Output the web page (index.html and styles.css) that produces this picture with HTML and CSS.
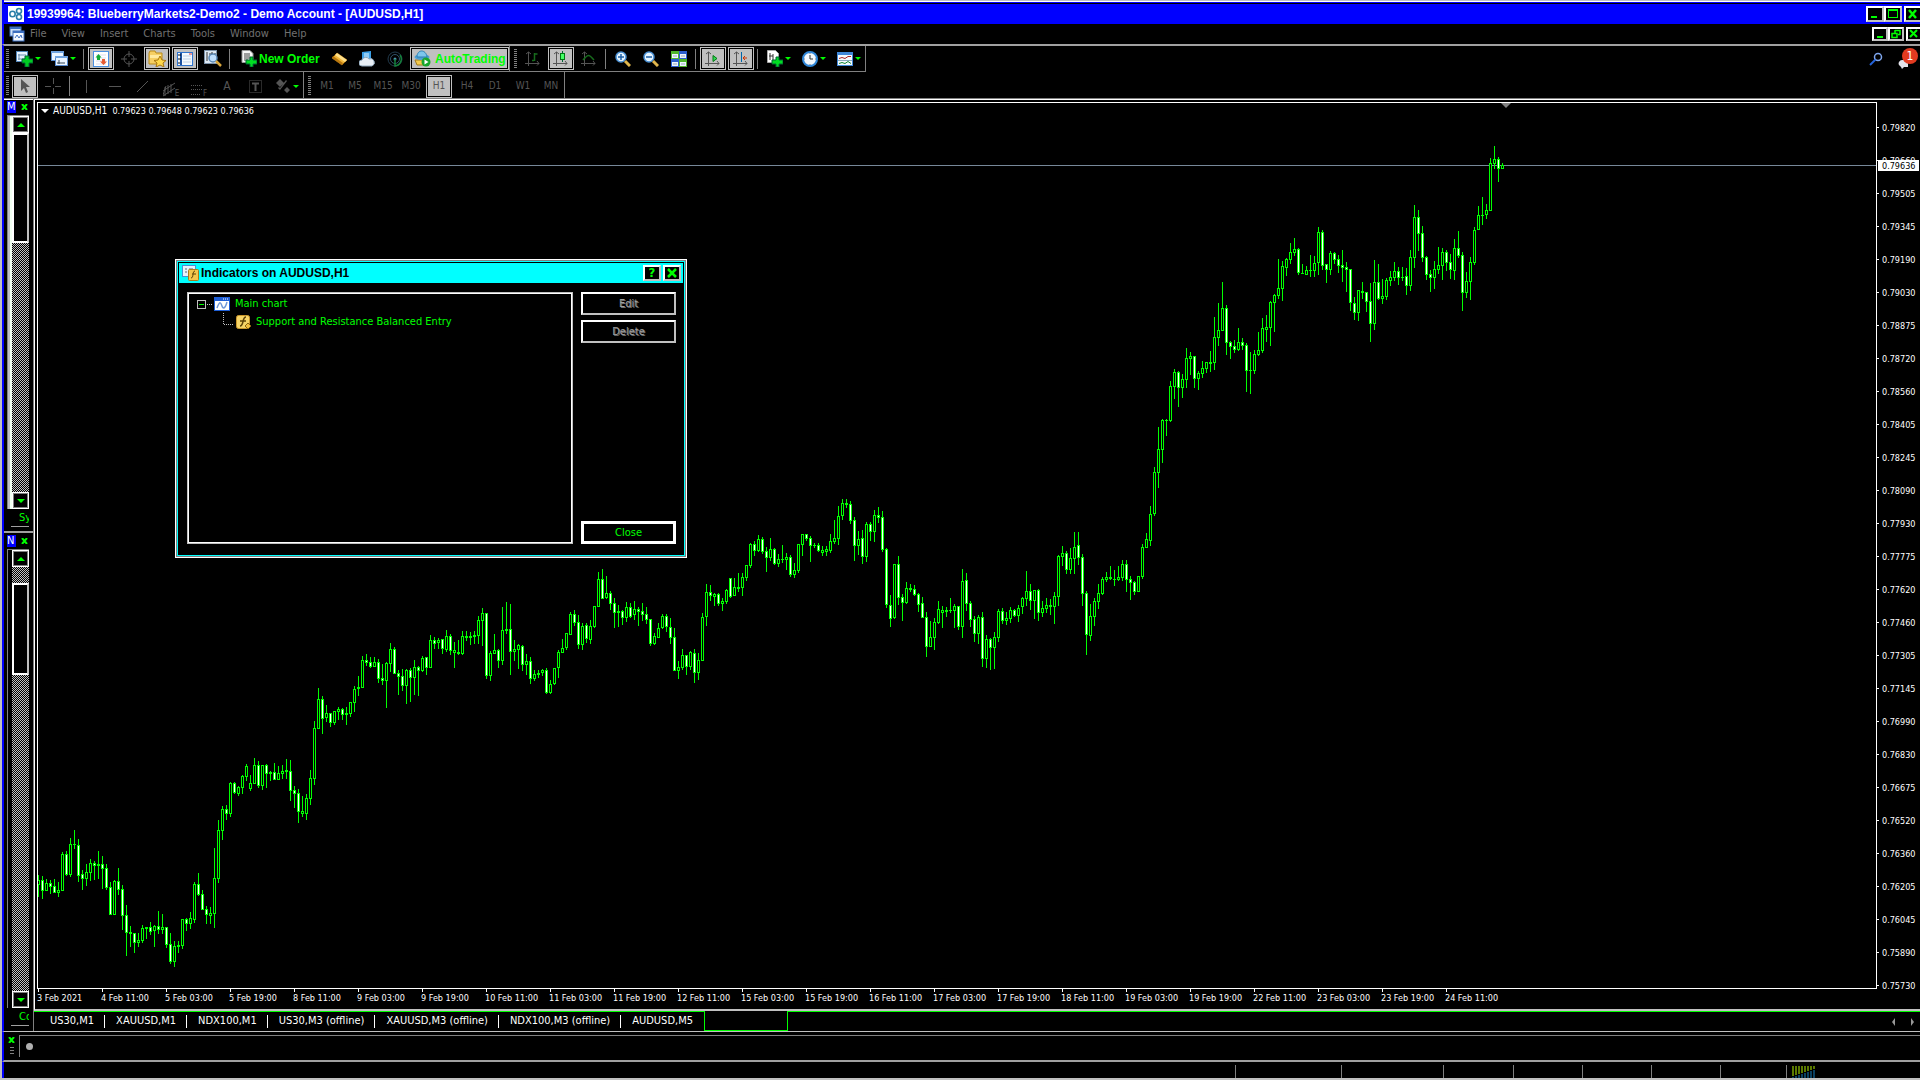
FILE: index.html
```html
<!DOCTYPE html>
<html lang="en">
<head>
<meta charset="utf-8">
<title>19939964: BlueberryMarkets2-Demo2 - Demo Account - [AUDUSD,H1]</title>
<link rel="stylesheet" href="styles.css">
</head>
<body>
<div class="app">
  <header class="titlebar">
    <svg class="app-logo" width="16" height="16" viewBox="0 0 16 16"><rect width="16" height="16" fill="#fff"/><g fill="none" stroke="#2a7fa8" stroke-width="1.6"><circle cx="4.500" cy="8" r="2.700"/><circle cx="11" cy="5" r="2.500"/><circle cx="11" cy="11" r="2.500"/></g></svg>
    <h1>19939964: BlueberryMarkets2-Demo2 - Demo Account - [AUDUSD,H1]</h1>
    <div class="window-buttons">
      <button class="wbtn" aria-label="Minimize"><svg width="14" height="12"><path d="M3 8h6v2H3z" fill="#0f0"/></svg></button>
      <button class="wbtn" aria-label="Maximize"><svg width="14" height="12"><path d="M2 1h10v9H2zM3 3v6h8V3z" fill="#0f0" fill-rule="evenodd"/></svg></button>
      <button class="wbtn wbtn-close" aria-label="Close"><svg width="14" height="12"><path d="M3 2l7 8M10 2l-7 8" stroke="#0f0" stroke-width="2.500"/></svg></button>
    </div>
  </header>

  <nav class="menubar">
    <svg class="menu-icon" width="16" height="16" viewBox="0 0 16 16"><rect x="1" y="1" width="11" height="9" fill="#cfe2f8" stroke="#3c6fc0"/><path d="M1 1h11v2H1z" fill="#3c6fc0"/><rect x="4" y="5" width="11" height="10" fill="#f4f9ff" stroke="#3c6fc0"/><path d="M4 5h11v2H4z" fill="#3c6fc0"/><path d="M6 12l2-3 2 3 2-3 1 3" fill="none" stroke="#3c6fc0"/></svg>
    <a href="#file">File</a><a href="#view">View</a><a href="#insert">Insert</a><a href="#charts">Charts</a><a href="#tools">Tools</a><a href="#window">Window</a><a href="#help">Help</a>
    <div class="window-buttons small">
      <button class="wbtn" aria-label="Minimize chart"><svg width="12" height="10"><path d="M3 7h6v2H3z" fill="#0f0"/></svg></button>
      <button class="wbtn" aria-label="Restore chart"><svg width="12" height="10"><path d="M5 1.500h5v4H8M5 1v3" fill="none" stroke="#0f0" stroke-width="1.500"/><rect x="2" y="4.500" width="5" height="4" fill="#000" stroke="#0f0" stroke-width="1.500"/></svg></button>
      <button class="wbtn wbtn-close" aria-label="Close chart"><svg width="12" height="10"><path d="M2 1l7 7M9 1l-7 7" stroke="#0f0" stroke-width="2"/></svg></button>
    </div>
  </nav>

  <div class="toolbar-row">
    <div class="toolbar">
      <span class="grip"></span>
      <button class="tool drop" aria-label="New chart"><svg width="17" height="16"><rect x=".5" y=".5" width="11" height="10" fill="#eaf4ff" stroke="#5588bb"/><path d="M2 8h8M3 3v6M2 4h8" stroke="#6b8fae"/><path d="M9 5h4v3h4v4h-4v4H9v-4H6V8h3z" fill="#0c2" stroke="#063"/></svg></button>
      <button class="tool drop" aria-label="Profiles"><svg width="17" height="16"><rect x=".5" y=".5" width="12" height="9" fill="#eaf4ff" stroke="#5588cc"/><path d="M0 0h13v2H0z" fill="#6fa3e0"/><rect x="4.500" y="5.500" width="12" height="9" fill="#eaf4ff" stroke="#5588cc"/><path d="M4 5h13v2H4z" fill="#6fa3e0"/><path d="M6 12h8M8 9v4" stroke="#345"/></svg></button>
      <span class="sep"></span>
      <button class="tool on" aria-label="Market watch"><svg width="16" height="16"><rect x=".5" y=".5" width="15" height="15" fill="#fff" stroke="#4b8fe0"/><path d="M3 4h10M3 7h10M3 10h10M3 13h10" stroke="#dde"/><path d="M5.500 3l3 3.500H7V9H4V6.500H2.500z" fill="#1a3"/><path d="M10.500 14l-3.500-3.500h2V8h3v2.500h2z" fill="#e65a30"/></svg></button>
      <button class="tool" aria-label="Data window"><svg width="16" height="16" fill="none" stroke="#555"><circle cx="8" cy="8" r="5"/><path d="M8 0v6M8 10v6M0 8h6M10 8h6"/></svg></button>
      <button class="tool on" aria-label="Navigator"><svg width="18" height="17"><path d="M1 3l1-2h5l1 2h6v11H1z" fill="#f6cf63" stroke="#b98a18"/><path d="M2 5h11v3H2z" fill="#ffeaa0"/><path d="M12 6l2 4 4 .5-3 2.500 1 4-4-2-4 2 1-4-3-2.500 4-.5z" fill="#ffd94a" stroke="#a87510"/></svg></button>
      <button class="tool on" aria-label="Terminal"><svg width="16" height="16"><rect x=".5" y="1.500" width="15" height="13" fill="#f4faff" stroke="#2f74cf"/><path d="M4 2v12" stroke="#1b4f9d" stroke-width="2"/><path d="M1 4h3M1 8h3M1 12h2" stroke="#111"/><path d="M6 5h8M6 8h8M6 11h8" stroke="#c0d0e4"/><path d="M12 3h3" stroke="#d33"/></svg></button>
      <button class="tool" aria-label="Strategy tester"><svg width="18" height="17"><rect x=".5" y=".5" width="12" height="13" fill="#dfeaf4" stroke="#7d93aa"/><path d="M3 2v9M5 4h4M8 2v8M11 3v4" stroke="#333"/><circle cx="9" cy="8" r="4" fill="#bfe0ff" stroke="#5b87b4" stroke-width="1.500"/><path d="M12 11l5 5" stroke="#d9a63b" stroke-width="2.500"/></svg></button>
      <span class="sep"></span>
      <button class="tool-text order"><svg width="16" height="17"><path d="M1 .5h8l3 3v9H1z" fill="#f6f6f6" stroke="#999"/><path d="M3 4h6M3 6h6M3 8h6M3 10h4" stroke="#444"/><path d="M9 7h3v3h4v4h-4v3H9v-3H5v-4h4z" fill="#0d2" stroke="#063"/></svg>New Order</button>
      <button class="tool" aria-label="MetaEditor"><svg width="17" height="14"><path d="M6 1l10 7-5 5L1 6z" fill="#f1b636" stroke="#8d5a06"/><path d="M6 1l10 7-2 2L4 3z" fill="#ffe08a"/><path d="M1 6l10 7 1-2L2 4z" fill="#b87710"/></svg></button>
      <button class="tool" aria-label="Virtual hosting"><svg width="16" height="16"><path d="M3 1l9-1v10l-9 1z" fill="#3ba0e8"/><path d="M5 3h5M5 5h5M5 7h5" stroke="#e4f5ff"/><path d="M3 15a3 3 0 010-6 4 4 0 017-1 3.500 3.500 0 013 7z" fill="#e8eef4" stroke="#8ea6ba"/></svg></button>
      <button class="tool" aria-label="Signals"><svg width="16" height="16" fill="none"><circle cx="8" cy="8" r="7" stroke="#223b4d"/><circle cx="8" cy="8" r="4.500" stroke="#31536a"/><circle cx="8" cy="8" r="1.500" fill="#4a90b0"/><path d="M8 8v7A7 7 0 0013 4" stroke="#15803a" stroke-width="1.500"/></svg></button>
      <button class="tool-text auto"><svg width="17" height="17"><path d="M1 10h13l-2 5H3z" fill="#f5cc4f" stroke="#a07a1d"/><ellipse cx="8" cy="7" rx="7.500" ry="3" fill="#4d9fd2"/><path d="M3 7c0-8 9-8 10 0z" fill="#7cc6ec" stroke="#2a7fb3"/><circle cx="12" cy="12" r="4.500" fill="#18a62b"/><path d="M10.500 9.500v5l4-2.500z" fill="#fff"/></svg>AutoTrading</button>
    </div>
    <div class="toolbar">
      <span class="grip"></span>
      <button class="tool" aria-label="Bar chart"><svg width="16" height="16" fill="none" stroke="#555"><path d="M3.500 1v14M0 12.500h14M1 3l2.500-2L6 3M12 10l2 2.500-2 2"/><path d="M9.500 2v8M9.500 3h3M7 9.500h2" stroke="#176b1c" stroke-width="1.500"/></svg></button>
      <button class="tool on" aria-label="Candlesticks"><svg width="16" height="16" fill="none" stroke="#555"><path d="M3.500 1v14M0 12.500h14M1 3l2.500-2L6 3M12 10l2 2.500-2 2"/><path d="M9.500 0v11" stroke="#063"/><rect x="7.500" y="2.500" width="4" height="6" fill="#4f6" stroke="#071"/></svg></button>
      <button class="tool" aria-label="Line chart"><svg width="16" height="16" fill="none" stroke="#555"><path d="M3.500 1v14M0 12.500h14M1 3l2.500-2L6 3M12 10l2 2.500-2 2"/><path d="M2 9c5-6 6-6 11 0" stroke="#176b1c" stroke-width="1.500"/></svg></button>
      <span class="sep"></span>
      <button class="tool" aria-label="Zoom in"><svg width="16" height="16"><circle cx="6" cy="6" r="5" fill="#e4f4ff" stroke="#4a90d4" stroke-width="1.500"/><path d="M3 6h6M6 3v6" stroke="#1d5fa6" stroke-width="1.500"/><path d="M10 10l5 5" stroke="#e0b64d" stroke-width="3"/></svg></button>
      <button class="tool" aria-label="Zoom out"><svg width="16" height="16"><circle cx="6" cy="6" r="5" fill="#e4f4ff" stroke="#4a90d4" stroke-width="1.500"/><path d="M3 6h6" stroke="#1d5fa6" stroke-width="1.500"/><path d="M10 10l5 5" stroke="#e0b64d" stroke-width="3"/></svg></button>
      <button class="tool" aria-label="Tile windows"><svg width="16" height="16"><path d="M0 0h8v8H0zM8 8h8v8H8z" fill="#4fb52c"/><path d="M8 0h8v8H8zM0 8h8v8H0z" fill="#2c5fd0"/><path d="M1 3h6v4H1zM9 3h6v4H9zM1 11h6v4H1zM9 11h6v4H9z" fill="#eef6ff"/><path d="M2 5h4M10 5h4M2 13h4M10 13h4" stroke="#9ab"/></svg></button>
      <span class="sep"></span>
      <button class="tool on" aria-label="Auto scroll"><svg width="16" height="16" fill="none" stroke="#555"><path d="M3.500 1v14M0 12.500h14M1 3l2.500-2L6 3M12 10l2 2.500-2 2"/><path d="M8 4.500v6L12 7.500z" fill="#3d5" stroke="#071"/></svg></button>
      <button class="tool on" aria-label="Chart shift"><svg width="16" height="16" fill="none" stroke="#555"><path d="M3.500 1v14M0 12.500h14M1 3l2.500-2L6 3M12 10l2 2.500-2 2"/><path d="M8.500 1v10" stroke="#06a"/><path d="M14 7h-4l2-2M10 7l2 2" stroke="#c30"/></svg></button>
      <span class="sep"></span>
      <button class="tool drop" aria-label="Indicators"><svg width="16" height="17"><path d="M.5 .5h8l3 3v9H.5z" fill="#fff" stroke="#aaa"/><path d="M3 3v7M2 6h4M6 4v6" stroke="#333"/><path d="M9 7h3v3h4v4h-4v3H9v-3H5v-4h4z" fill="#0d2" stroke="#063"/></svg></button>
      <button class="tool drop" aria-label="Periods"><svg width="16" height="16"><circle cx="8" cy="8" r="7" fill="#f2f8fd" stroke="#2f86d8" stroke-width="2"/><path d="M8 4v4h3" fill="none" stroke="#333"/><path d="M8 2v1M8 13v1M2 8h1M13 8h1" stroke="#777"/></svg></button>
      <button class="tool drop" aria-label="Templates"><svg width="16" height="14"><rect x=".5" y=".5" width="15" height="13" fill="#f5faff" stroke="#3f87d8"/><path d="M0 0h16v3H0z" fill="#3f87d8"/><path d="M2 6.500l3-1 3 1 3-2h3" fill="none" stroke="#a22"/><path d="M1 8.500h14" stroke="#8ab"/><path d="M2 11.500l3-1 3 1 3-2 3 2" fill="none" stroke="#183"/></svg></button>
    </div>
    <div class="toolbar-right">
      <button class="tool" aria-label="Search"><svg width="14" height="14"><circle cx="9" cy="5" r="3.500" fill="none" stroke="#7fa6ee" stroke-width="1.500"/><path d="M6.500 7.500L1 13" stroke="#2563d8" stroke-width="2"/></svg></button>
      <button class="tool alerts" aria-label="Notifications"><svg width="12" height="12"><path d="M1 8a4 3.500 0 014-5h5v7H6l-2 2-1-2z" fill="#e2e2ea"/></svg><span class="badge">1</span></button>
    </div>
  </div>

  <div class="toolbar-row second">
    <div class="toolbar">
      <span class="grip"></span>
      <button class="tool on" aria-label="Cursor"><svg width="16" height="16"><path d="M4 1v12l3-3 2 5 2-1-2-5h4z" fill="#555"/></svg></button>
      <button class="tool" aria-label="Crosshair"><svg width="16" height="16"><path d="M8.500 0v6M8.500 10v6M0 8.500h6M10 8.500h6" stroke="#555"/></svg></button>
      <span class="sep"></span>
      <button class="tool" aria-label="Vertical line"><svg width="16" height="16"><path d="M7.500 2v13" stroke="#555"/></svg></button>
      <button class="tool" aria-label="Horizontal line"><svg width="16" height="16"><path d="M2 8.500h12" stroke="#555"/></svg></button>
      <button class="tool" aria-label="Trendline"><svg width="16" height="16"><path d="M2 14L13 3" stroke="#555"/></svg></button>
      <button class="tool lettered" aria-label="Equidistant channel"><svg width="12" height="16"><path d="M0 9l12-8M0 14l12-8M2 5v9M5 3v9M8 2v9M3 4l-3 9" stroke="#555"/></svg><i>E</i></button>
      <button class="tool lettered" aria-label="Fibonacci"><svg width="12" height="16"><path d="M0 3.500h12M0 7.500h12M0 12.500h9" stroke="#555" stroke-dasharray="1 1"/></svg><i>F</i></button>
      <button class="tool glyph">A</button>
      <button class="tool" aria-label="Text label"><svg width="16" height="16" fill="none"><rect x="2.500" y="2.500" width="12" height="12" stroke="#555" stroke-dasharray="1 1"/><path d="M5 5.500h7M8.500 5v8" stroke="#555" stroke-width="2"/></svg></button>
      <button class="tool drop" aria-label="Arrows"><svg width="16" height="16" fill="#555"><path d="M5 1l4 4-4 4-4-4zM12 9l3 3-3 3-3-3zM11 2l1 1-7 9-2-2 1-1 1 1z"/></svg></button>
    </div>
    <div class="toolbar periods">
      <span class="grip"></span>
      <button class="tool">M1</button><button class="tool">M5</button><button class="tool">M15</button><button class="tool">M30</button><button class="tool on">H1</button><button class="tool">H4</button><button class="tool">D1</button><button class="tool">W1</button><button class="tool">MN</button>
    </div>
  </div>

  <main class="workspace">
    <aside class="docks">
      <section class="dock market">
        <header class="dock-head"><span>M</span><button aria-label="Close panel"><svg width="7" height="6"><path d="M1 0l5 6M6 0L1 6" stroke="#0f0" stroke-width="2"/></svg></button></header>
        <div class="dock-body">
          <div class="rows"></div>
          <div class="scroll">
            <button class="arrow up" aria-label="Scroll up"></button><div class="thumb"></div><div class="track"></div><button class="arrow down" aria-label="Scroll down"></button>
          </div>
        </div>
        <footer class="dock-tab">Sy</footer>
      </section>
      <section class="dock navigator">
        <header class="dock-head"><span>N</span><button aria-label="Close panel"><svg width="7" height="6"><path d="M1 0l5 6M6 0L1 6" stroke="#0f0" stroke-width="2"/></svg></button></header>
        <div class="dock-body">
          <div class="rows"></div>
          <div class="scroll">
            <button class="arrow up" aria-label="Scroll up"></button><div class="track lead"></div><div class="thumb"></div><div class="track"></div><button class="arrow down" aria-label="Scroll down"></button>
          </div>
        </div>
        <footer class="dock-tab">Co</footer>
      </section>
    </aside>

    <section class="chart-window">
      <div class="chart">
        <div class="plot">
          <svg class="candles" id="candles" shape-rendering="crispEdges"></svg>
          <div class="plot-title"><span class="symbol">AUDUSD,H1</span>&nbsp; 0.79623 0.79648 0.79623 0.79636</div>
          <span class="shift-mark"></span>
        </div>
        <div class="price-axis" id="prices"><b class="price-tag">0.79636</b></div>
      </div>
      <div class="time-axis" id="times"></div>
      <div class="tabs">
        <button>US30,M1</button><button>XAUUSD,M1</button><button>NDX100,M1</button><button>US30,M3 (offline)</button><button>XAUUSD,M3 (offline)</button><button>NDX100,M3 (offline)</button><button>AUDUSD,M5</button><button class="selected" aria-label="AUDUSD,H1"></button>
        <div class="tab-fill"><svg width="24" height="10"><path d="M4 1v8L1 5zM20 1v8l3-4z" fill="#999"/></svg></div>
      </div>
    </section>
  </main>

  <section class="terminal">
    <div class="terminal-side"><button aria-label="Close terminal"><svg width="7" height="6"><path d="M1 0l5 6M6 0L1 6" stroke="#0f0" stroke-width="2"/></svg></button><span class="side-grip"></span></div>
    <div class="terminal-body"><span class="dot"></span></div>
  </section>
  <footer class="status">
    <span class="cell c1"></span><span class="cell c2"></span><span class="cell c3"></span><span class="cell c4"></span><span class="cell c4"></span><span class="cell c4"></span><span class="cell c5"></span>
    <span class="cell c6"><svg width="24" height="12" id="signal"></svg></span>
  </footer>
</div>

<div class="dialog" role="dialog" aria-labelledby="dlg-title">
  <header class="dialog-title">
    <svg width="17" height="16"><rect x=".5" y=".5" width="13" height="11" fill="#e8f2fb" stroke="#4a90d4"/><path d="M3 4h2M3 7h2M7 4h4" stroke="#567"/><rect x="6.500" y="4.500" width="10" height="11" rx="1" fill="#f3c64d" stroke="#a87a1a"/><path d="M13 6c-3 0-1 7-4 7M10 9h4" fill="none" stroke="#5c4208"/></svg>
    <h2 id="dlg-title">Indicators on AUDUSD,H1</h2>
    <button class="wbtn help">?</button>
    <button class="wbtn" aria-label="Close dialog"><svg width="12" height="12"><path d="M2 2l8 8M10 2l-8 8" stroke="#0f0" stroke-width="2.500"/></svg></button>
  </header>
  <div class="dialog-body">
    <ul class="tree">
      <li><svg width="17" height="15" fill="none"><rect x=".5" y="3.500" width="8" height="8" stroke="#c0c0c0"/><path d="M2 7.500h5" stroke="#0f0"/><path d="M10 7.500h6" stroke="#c0c0c0" stroke-dasharray="1 1"/></svg><svg width="16" height="14"><rect x=".5" y=".5" width="15" height="13" fill="#fff" stroke="#1f5fd6"/><path d="M0 0h16v4H0z" fill="#1f5fd6"/><path d="M9 2h5" stroke="#fff" stroke-dasharray="1 1"/><path d="M3 11c3-8 4-5 5-2s3 3 5-4" fill="none" stroke="#6f98d8" stroke-width="1.500"/></svg><span>Main chart</span></li>
      <li class="child"><svg width="12" height="18"><path d="M.5 0v12M1 11.500h10" fill="none" stroke="#c0c0c0" stroke-dasharray="1 1"/></svg><svg width="15" height="15"><rect x=".5" y=".5" width="13" height="13" rx="2" fill="#f6d467" stroke="#c9962a"/><path d="M10 2c-4 0-2 9-6 9M4 6h6" fill="none" stroke="#5c4208" stroke-width="1.500"/><path d="M12 8l3 3-3 3-3-3z" fill="#f3c040" stroke="#8a6510"/></svg><span>Support and Resistance Balanced Entry</span></li>
    </ul>
    <div class="dialog-actions">
      <button class="btn" disabled>Edit</button>
      <button class="btn" disabled>Delete</button>
      <button class="btn default">Close</button>
    </div>
  </div>
</div>
<script src="chart.js"></script>
</body>
</html>
```
FILE: chart.js
```js
// Bars are "high top bottom low", in thirds of a pixel below the block's base.
// A trailing w marks a falling bar, which is filled white.
const blocks = [
  [457, `945 960 975 1010,948 960 992 1017w,957 969 992 992,960 969 981 1002w,957 978 998 998w,966 990 999 1011,876 882 992 992,873 882 945 948w,834 852 945 951,810 853 853 867,837 855 948 966w,930 942 957 990w,912 936 957 978,897 909 939 963,903 909 918 960w,873 912 917 957,888 912 927 987w,912 924 984 990w,966 981 1065 1065w,960 963 1065 1065,924 963 990 1005w,975 987 1068 1110w,1035 1065 1119 1188w,1098 1116 1121 1161,1119 1119 1149 1179w,1119 1140 1149 1161,1095 1104 1143 1149,1101 1101 1106 1137,1086 1101 1116 1125w,1095 1098 1113 1161,1053 1098 1110 1122w,1062 1101 1110 1122,1101 1101 1155 1164w,1119 1152 1206 1212w,1143 1158 1206 1221,1143 1155 1160 1179,1077 1077 1158 1167,1074 1077 1092 1113w,1056 1074 1092 1107,966 972 1080 1089,939 972 1005 1008w,990 1002 1050 1050w,1038 1047 1065 1092w,1041 1059 1068 1092,864 954 1062 1104,780 810 957 969,738 747 813 840,735 747 762 780w,666 669 762 771,666 669 699 702w,678 681 702 708,645 648 684 702,612 618 651 663,645 669 687 693,594 615 672 672,603 615 678 684w,615 615 678 690,612 615 642 684w,633 636 641 663,609 636 660 660w,618 639 660 660,615 633 642 657,597 630 636 657,600 633 693 723w,678 690 702 744w,687 699 756 789w,708 753 762 771,702 714 762 780,630 654 717 735,483 504 657 675,384 417 507 507,408 417 477 522w,435 459 474 486,459 459 489 501w,453 453 489 495,441 447 456 480,444 447 465 480w,441 459 465 495,426 426 462 471,378 387 429 456,348 381 386 408,288 300 384 384,282 300 309 318w,291 306 321 324w,291 306 321 321,297 306 357 369w,312 354 363 375w,306 309 363 444,249 267 312 336,261 267 342 342w,330 339 351 405w,327 348 378 393w,327 330 378 432,324 330 354 426w,300 321 354 405,318 321 333 408w,288 294 333 336,291 291 324 345w,225 240 324 324,231 240 252 267w,234 240 249 267,237 237 267 282w,210 228 270 276,222 228 273 285w,246 270 279 324,240 276 281 285,213 228 282 285,213 228 234 243,216 228 234 255,213 225 231 252,168 180 228 252,144 159 183 258,159 159 348 357w,273 279 348 363,222 270 282 282,267 270 303 324w,141 210 303 315,126 207 212 222`],
  [377, `372 447 516 585w,480 507 516 543,492 495 510 567,495 498 555 573w,522 543 555 585,531 543 597 612w,570 582 597 603,570 579 584 594,567 570 579 588,564 570 639 642w,600 612 639 642,564 564 612 615,510 516 564 594,477 504 518 519,459 459 504 510,396 402 465 465,390 402 429 438w,405 426 495 507w,429 438 495 510,429 435 477 489w,420 438 480 492,378 378 441 444,276 297 381 381,267 297 357 357w,288 339 354 357,333 339 372 390w,354 369 399 444w,375 393 398 441,390 393 414 435w,366 381 414 426,369 381 411 414w,363 387 405 420,381 387 396 438w,369 393 405 423w,381 402 420 432w,417 417 492 498w,459 468 492 495,429 444 474 474,402 408 444 447,402 408 441 456w,414 441 474 492w,444 471 573 573w,543 561 573 597,507 525 564 570,525 525 561 585w,513 516 561 570,507 519 579 609w,519 540 579 600,399 411 543 543,312 336 411 438,315 336 348 363w,339 342 351 378,339 342 372 378w,354 363 372 393,327 330 366 372,294 294 351 354w,294 321 348 348,279 321 326 336,279 291 324 348,255 255 294 303,189 192 258 264,183 192 213 228w,165 177 213 216,171 177 216 222w,201 213 234 276w,174 207 234 243,204 207 252 255w,222 237 252 261,195 237 240 249,219 231 240 270,225 231 285 291w,249 270 285 294,192 192 273 279,162 162 195 228,162 162 177 183w,168 174 198 246w,189 195 198 204,189 195 213 216w,198 210 219 228,198 207 216 228,162 183 213 219,120 174 186 192,78 108 177 195,57 69 108 120,57 69 75 84,63 72 123 132w,111 120 198 243w,153 177 198 225,150 174 231 252w,126 132 231 246,126 132 156 183w,90 105 156 186,81 105 114 129w,93 111 210 216w,204 207 375 384w,345 375 417 441w,252 252 414 417,228 252 354 375w,342 351 369 423w,306 324 369 372,312 324 329 336,315 327 345 348w,339 342 375 396w,351 369 414 414w,396 411 501 531w,423 471 501 501,414 426 474 510,363 387 429 432,378 390 399 444,381 390 395 411,354 390 393 399,372 378 393 444,378 378 441 450w,267 303 441 474,279 300 372 393w,363 369 420 441w,408 417 462 486w,405 411 462 492,396 411 537 561w,465 477 537 564,474 477 504 570w,456 471 504 567`],
  [317, `567 573 654 666,564 573 603 612w,576 594 603 615,561 570 597 609,567 570 588 591w,555 564 588 606,531 534 561 582,453 513 537 558,492 513 543 570w,510 510 543 597,507 510 579 603w,543 564 579 591,534 555 567 579,537 555 561 585,516 528 561 612,405 408 531 558,378 399 411 438,393 399 450 462w,384 414 450 462,336 381 417 462,336 375 414 435w,402 411 522 558w,513 519 645 705w,552 588 648 663,534 543 591 618,492 519 546 567,471 477 522 525,456 471 480 486,438 471 477 480,450 478 480 498,438 471 480 483,420 432 474 483,420 432 480 516w,468 477 489 540w,483 486 516 525w,468 468 516 516,372 381 471 477`],
  [27, `1209 1227 1254 1254,1128 1152 1233 1248,1011 1026 1152 1158,891 957 1029 1074,867 870 960 999,867 870 873 918,753 768 873 876,717 726 771 807,723 726 774 831w,732 747 774 804,654 684 750 774,666 678 687 735,678 678 747 774w,723 729 747 780,693 714 732 744,696 696 717 729,663 696 702 726,561 621 699 720,519 600 624 648,456 534 603 603,525 534 639 675w,633 636 651 687w,630 648 660 669w,594 636 660 663,624 636 648 660w,639 645 723 786w,666 720 723 792,660 672 723 732,606 660 675 678,564 594 663 669,555 591 600 636,513 516 594 648,492 495 519 606,387 474 498 507,393 408 477 513,384 387 414 438,339 366 390 402,324 357 369 378,354 357 429 435w,402 430 432 432,408 420 435 435,375 420 423 441,378 399 423 441,291 306 399 435,300 306 408 420w,402 402 420 459w,363 369 420 435,366 369 390 402w,375 387 408 429w,360 405 414 456w,396 411 420 486w,417 417 519 543w,501 519 549 570w,480 480 549 573,456 483 489 507,486 486 516 546w,459 513 582 636w,390 456 582 600,402 456 507 510w,447 498 507 522,444 450 501 510,423 441 453 468,396 423 444 453,411 423 444 465w,411 441 444 453,414 438 468 495w,360 381 468 483,225 261 384 414,240 261 312 363w,288 309 384 396w,378 381 435 450w,420 432 444 486w,393 417 444 477,351 405 420 432,354 366 408 450,360 366 399 423w,372 396 420 447w,327 354 423 450,303 354 378 384w,366 375 489 543w,426 453 489 504,381 396 456 510,291 300 399 405,228 255 300 300,201 255 258 285,222 240 255 267,84 99 243 243,48 87 102 117,81 87 117 156w,99 105 117 117`]
];

const rect = (x, y, w, h, fill) => `<rect x="${x}" y="${y}" width="${w}" height="${h}" fill="${fill}"/>`;

let out = rect(0, 62, '100%', 1, '#778899');
let x = 0;
for (const [base, rows] of blocks) {
  for (const row of rows.split(',')) {
    const [high, top, bottom, low] = row.split(' ').map(v => base + Math.round(parseInt(v, 10) / 3));
    const body = Math.max(1, bottom - top);
    out += rect(x, high, 1, Math.max(low, bottom) - high, '#0f0');
    out += rect(x - 1, top, 3, body, '#0f0');
    if (body > 2) out += rect(x, top + 1, 1, body - 2, row.endsWith('w') ? '#fff' : '#000');
    x += 4;
  }
}
document.getElementById('candles').innerHTML = out;

const prices = '0.79820 0.79660 0.79505 0.79345 0.79190 0.79030 0.78875 0.78720 0.78560 0.78405 0.78245 0.78090 0.77930 0.77775 0.77620 0.77460 0.77305 0.77145 0.76990 0.76830 0.76675 0.76520 0.76360 0.76205 0.76045 0.75890 0.75730';
document.getElementById('prices').insertAdjacentHTML('afterbegin', prices.split(' ').map(p => `<span>${p}</span>`).join(''));

const times = '3 Feb 2021,4 Feb 11:00,5 Feb 03:00,5 Feb 19:00,8 Feb 11:00,9 Feb 03:00,9 Feb 19:00,10 Feb 11:00,11 Feb 03:00,11 Feb 19:00,12 Feb 11:00,15 Feb 03:00,15 Feb 19:00,16 Feb 11:00,17 Feb 03:00,17 Feb 19:00,18 Feb 11:00,19 Feb 03:00,19 Feb 19:00,22 Feb 11:00,23 Feb 03:00,23 Feb 19:00,24 Feb 11:00';
document.getElementById('times').innerHTML = times.split(',').map(t => `<span>${t}</span>`).join('');

let bars = '';
for (let i = 0; i < 8; i++) bars += rect(i * 3, 0, 2, 10 - i, '#5a7a00') + rect(i * 3, 11 - i, 2, 1 + i, '#0a4060');
document.getElementById('signal').innerHTML = bars;
```
FILE: styles.css
```css
* { box-sizing: border-box; }

body {
  margin: 0;
  background: #000;
  color: #fff;
  font-family: "DejaVu Sans Condensed", "Noto Sans", sans-serif;
  font-size: 10px;
  line-height: 12px;
}

button {
  margin: 0;
  padding: 0;
  border: 0;
  background: none;
  color: inherit;
  font: inherit;
}

h1, h2, ul { margin: 0; padding: 0; }
svg { display: block; flex: none; }

.app {
  display: flex;
  flex-direction: column;
  height: 100vh;
  min-height: 700px;
  border-left: 2px solid #c0c0c0;
  border-bottom: 2px solid #c0c0c0;
  overflow: hidden;
}

.app > * { border-left: 2px solid #00f; }

/* Title and menu */
.titlebar {
  display: flex;
  align-items: center;
  flex: none;
  height: 24px;
  padding: 4px 0 0 4px;
  background: linear-gradient(#c0c0c0 0 1px, #fff 1px 2px, #00f 2px 3px, #000 3px 4px, #00f 4px);
}

.titlebar h1 {
  flex: 1;
  margin-left: 3px;
  font: bold 12px/16px "Liberation Sans", sans-serif;
  white-space: nowrap;
}

.window-buttons { display: flex; }
.wbtn {
  display: flex;
  align-items: center;
  justify-content: center;
  width: 18px;
  height: 16px;
  border: 2px solid #fff;
  border-right-color: #c0c0c0;
  border-bottom-color: #c0c0c0;
  background: #000;
  color: #0f0;
}
.titlebar .wbtn-close { margin-left: 2px; width: 16px; border-right: 0; }

.menubar {
  display: flex;
  align-items: center;
  flex: none;
  gap: 15px;
  height: 20px;
  padding-left: 5px;
  color: #707070;
  font-size: 11px;
}
.menubar a { color: inherit; text-decoration: none; }
.menu-icon { margin-right: -10px; }
.small { margin-left: auto; }
.small .wbtn { width: 16px; height: 14px; }
.small .wbtn-close { margin-left: 2px; width: 14px; border-right: 0; }

/* Toolbars */
.toolbar-row {
  display: flex;
  flex: none;
  height: 28px;
  border-top: 2px solid;
  border-top-color: #a0a0a0;
}
.toolbar-row.second { height: 26px; border-top: 0; }
.toolbar {
  display: flex;
  align-items: center;
  gap: 2px;
  padding-left: 2px;
  border-right: 1px solid #808080;
  border-bottom: 1px solid #808080;
}
.toolbar + .toolbar { padding-left: 4px; }
.second .toolbar { padding-top: 2px; border-bottom: 0; }

.grip {
  width: 3px;
  height: 20px;
  margin-right: 1px;
  background: repeating-linear-gradient(#808080 0 1px, #000 1px 2px);
}
.sep { width: 1px; height: 20px; margin: 0 2px 0 1px; background: #808080; }

.tool {
  display: flex;
  align-items: center;
  justify-content: center;
  flex: none;
  width: 26px;
  height: 23px;
  color: #555;
}
.tool.on {
  border: 1px solid #808080;
  outline: 1px solid #c0c0c0;
  outline-offset: -1px;
  box-shadow: inset 0 0 0 1px #000;
  background: #c0c0c0;
}
.tool.drop { width: 33px; gap: 2px; }
.tool.drop::after {
  content: "";
  border: 3px solid transparent;
  border-top-color: #0f0;
  border-bottom: 0;
}
.lettered { align-items: flex-end; }
.lettered i { font: 8px/8px "DejaVu Sans Condensed", sans-serif; }
.glyph { font-size: 12px; }

.tool-text {
  display: flex;
  align-items: center;
  height: 23px;
  color: #0f0;
  font: bold 12px/16px "Liberation Sans", sans-serif;
  white-space: nowrap;
}
.order { gap: 2px; width: 90px; padding-left: 7px; }
.auto {
  gap: 4px;
  width: 99px;
  padding-left: 3px;
  border: 1px solid #808080;
  outline: 1px solid #c0c0c0;
  outline-offset: -1px;
  box-shadow: inset 0 0 0 1px #000;
  background: #c0c0c0;
}

.toolbar-right { display: flex; align-items: center; gap: 5px; margin-left: auto; }
.alerts { position: relative; align-items: flex-end; justify-content: flex-start; padding: 0 0 2px 4px; }
.badge {
  position: absolute;
  top: 0;
  right: 2px;
  width: 16px;
  height: 16px;
  border-radius: 50%;
  background: #e23a20;
  color: #fff;
  font-size: 12px;
  line-height: 16px;
}

/* Left docks */
.workspace {
  display: flex;
  flex: 1;
  min-height: 0;
  border-bottom: 1px solid #c0c0c0;
  background: linear-gradient(#808080 0 1px, #fff 1px 2px, transparent 2px);
}
.docks { display: flex; flex-direction: column; width: 29px; padding: 1px 4px 0 3px; flex: none; }
.dock { display: flex; flex-direction: column; min-height: 0; }
.market { flex: 432 1 0; }
.navigator { flex: 493 1 0; border-top: 2px solid #a0a0a0; margin: 0 -4px 0 -3px; padding: 0 4px 5px 3px; }
.dock-head { display: flex; align-items: center; flex: none; height: 16px; font-size: 11px; }
.dock-head span { width: 9px; height: 12px; margin-right: 5px; overflow: hidden; background: #00f; }
.dock-body { display: flex; flex: 1; min-height: 0; border-top: 1px solid #808080; border-left: 1px solid #808080; }
.rows { width: 4px; }
.market .rows { background: linear-gradient(90deg, #c0c0c0 0 2px, #f0fff0 2px); }
.scroll { display: flex; flex-direction: column; width: 17px; }
.thumb { flex: none; height: 110px; border: 2px solid #fff; border-right-color: #c0c0c0; }
.navigator .thumb { height: 92px; }
.track {
  flex: 1;
  background: repeating-conic-gradient(#c0c0c0 0 25%, #000 0 50%) 0 0 / 2px 2px;
}
.track.lead { flex: none; height: 16px; }
.arrow {
  display: flex;
  align-items: center;
  justify-content: center;
  flex: none;
  height: 17px;
  border: 1px solid #fff;
  outline: 1px solid #808080;
  outline-offset: -2px;
}
.arrow::after { content: ""; border: 4px solid transparent; }
.up::after { border-top: 0; border-bottom-color: #0f0; }
.down::after { border-bottom: 0; border-top-color: #0f0; }
.dock-tab {
  flex: none;
  height: 18px;
  margin-left: 4px;
  padding-left: 8px;
  overflow: hidden;
  border-bottom: 1px solid #a0a0a0;
  color: #0f0;
  font-size: 11px;
  line-height: 18px;
}
.market .dock-tab { margin-bottom: 4px; }

/* Chart */
.chart-window {
  display: flex;
  flex-direction: column;
  flex: 1;
  min-width: 0;
  margin-top: 1px;
  border-left: 1px solid #808080;
  font-size: 9px;
}
.chart {
  display: flex;
  flex: 1;
  min-height: 0;
  padding: 3px 0 0 2px;
  border-left: 1px solid #fff;
}
.plot {
  position: relative;
  flex: 1;
  min-width: 0;
  border: 1px solid #fff;
}
.candles { width: 100%; height: 100%; }
.plot-title { position: absolute; top: 2px; left: 15px; white-space: pre; }
.symbol { font-size: 10px; }
.plot-title::before {
  content: "";
  position: absolute;
  top: 4px;
  left: -12px;
  border: 4px solid transparent;
  border-top-color: #fff;
  border-bottom: 0;
}
.shift-mark {
  position: absolute;
  top: 0;
  left: 1463px;
  border: 5px solid transparent;
  border-top-color: #808080;
  border-bottom: 0;
}
.price-axis { position: relative; width: 43px; padding-top: 9px; flex: none; }
.price-axis span { display: flex; align-items: center; gap: 3px; height: 33px; }
.price-axis span::before { content: ""; width: 2px; height: 1px; background: #fff; }
.price-tag {
  position: absolute;
  top: 58px;
  left: 1px;
  right: 1px;
  height: 11px;
  padding-left: 4px;
  background: #fff;
  color: #000;
  font-weight: normal;
  line-height: 12px;
}
.time-axis {
  display: flex;
  flex: none;
  height: 22px;
  padding-left: 2px;
  overflow: hidden;
  border-left: 1px solid #fff;
  border-bottom: 2px solid #c0c0c0;
}
.time-axis span {
  flex: none;
  width: 64px;
  padding-top: 3px;
  background: linear-gradient(#fff, #fff) 1px 0 / 1px 3px no-repeat;
  white-space: nowrap;
}

.tabs { display: flex; flex: none; height: 20px; font-size: 11px; }
.tabs button {
  position: relative;
  padding: 0 11px 2px;
  border-top: 1px solid #0f0;
  white-space: nowrap;
}
.tabs button:first-child { padding-left: 16px; }
.tabs button:not(:nth-last-child(-n+3))::after {
  content: "";
  position: absolute;
  top: 3px;
  right: 0;
  width: 1px;
  height: 13px;
  background: #fff;
}
.tabs .selected { width: 84px; border: 1px solid #0f0; border-top: 0; }
.tab-fill {
  display: flex;
  flex: 1;
  align-items: center;
  justify-content: flex-end;
  padding-right: 5px;
  border-top: 1px solid #0f0;
}

/* Terminal strip and status bar */
.terminal { display: flex; flex: none; height: 30px; padding-top: 3px; border-bottom: 2px solid #a0a0a0; }
.terminal-side { display: flex; flex-direction: column; align-items: center; gap: 4px; width: 15px; padding-top: 2px; }
.side-grip { width: 4px; height: 8px; background: repeating-linear-gradient(#808080 0 1px, #000 1px 3px); }
.terminal-body { flex: 1; margin-bottom: 3px; padding: 7px 0 0 6px; border-top: 1px solid #808080; border-left: 1px solid #808080; }
.dot { display: block; width: 7px; height: 7px; border-radius: 50%; background: #b0b0b0; }

.status { display: flex; justify-content: flex-end; flex: none; height: 16px; padding-top: 3px; }
.cell { height: 13px; border-left: 1px solid #808080; }
.c1 { width: 106px; }
.c2 { width: 102px; }
.c3 { width: 70px; }
.c4 { width: 69px; }
.c5 { width: 66px; }
.c6 { width: 134px; padding: 1px 0 0 5px; }

/* Indicators dialog */
.dialog {
  position: absolute;
  top: 259px;
  left: 175px;
  display: flex;
  flex-direction: column;
  width: 512px;
  height: 299px;
  padding: 1px;
  border: 1px solid #fff;
  box-shadow: inset 0 0 0 1px #808080, inset 0 0 0 2px #0ff;
  background: #000;
  font-size: 11px;
}
.dialog-title {
  display: flex;
  align-items: center;
  height: 20px;
  margin: 2px;
  padding: 0 2px 0 3px;
  background: #0ff;
  color: #000;
}
.dialog-title h2 { flex: 1; margin-left: 2px; font: bold 12px/16px "Liberation Sans", sans-serif; }
.dialog-title .wbtn + .wbtn { margin-left: 2px; }
.help { font-weight: bold; font-size: 13px; }
.dialog-body { display: flex; flex: 1; gap: 8px; padding: 7px 9px 12px 10px; }
.tree {
  flex: 1;
  padding: 2px 0 0 9px;
  border: 1px solid #c0c0c0;
  outline: 1px solid #fff;
  outline-offset: -2px;
  color: #0f0;
  list-style: none;
}
.tree li { display: flex; align-items: center; height: 18px; }
.tree span { margin-left: 5px; }
.tree .child { padding-left: 26px; }
.tree .child svg + svg { margin-left: 1px; }
.dialog-actions { display: flex; flex-direction: column; gap: 5px; width: 95px; }
.btn { height: 23px; border: 2px solid #fff; border-right-color: #c0c0c0; border-bottom-color: #c0c0c0; color: #0f0; }
.btn:disabled { color: #a0a0a0; text-shadow: 1px 1px 0 #707070; }
.default { margin-top: auto; border: 3px solid #fff; }
```
